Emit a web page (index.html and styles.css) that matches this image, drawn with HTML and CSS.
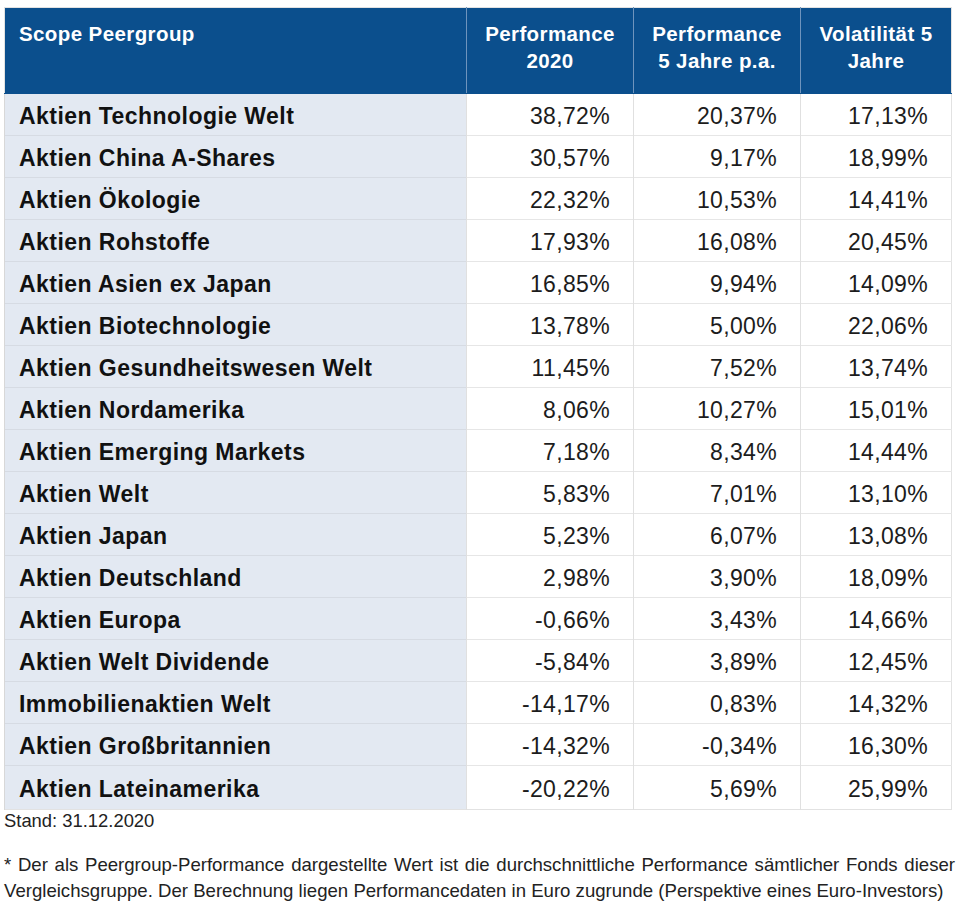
FILE: index.html
```html
<!DOCTYPE html>
<html lang="de">
<head>
<meta charset="utf-8">
<title>Scope Peergroup</title>
<link rel="stylesheet" href="styles.css">
</head>
<body>
<div class="page">
  <table class="peer">
    <colgroup>
      <col class="c1"><col class="c2"><col class="c3"><col class="c4">
    </colgroup>
    <thead>
      <tr>
        <th class="name">Scope Peergroup</th>
        <th>Performance<br>2020</th>
        <th>Performance<br>5 Jahre p.a.</th>
        <th>Volatilität 5<br>Jahre</th>
      </tr>
    </thead>
    <tbody>
      <tr><td class="name">Aktien Technologie Welt</td><td>38,72%</td><td>20,37%</td><td>17,13%</td></tr>
      <tr><td class="name">Aktien China A-Shares</td><td>30,57%</td><td>9,17%</td><td>18,99%</td></tr>
      <tr><td class="name">Aktien Ökologie</td><td>22,32%</td><td>10,53%</td><td>14,41%</td></tr>
      <tr><td class="name">Aktien Rohstoffe</td><td>17,93%</td><td>16,08%</td><td>20,45%</td></tr>
      <tr><td class="name">Aktien Asien ex Japan</td><td>16,85%</td><td>9,94%</td><td>14,09%</td></tr>
      <tr><td class="name">Aktien Biotechnologie</td><td>13,78%</td><td>5,00%</td><td>22,06%</td></tr>
      <tr><td class="name">Aktien Gesundheitswesen Welt</td><td>11,45%</td><td>7,52%</td><td>13,74%</td></tr>
      <tr><td class="name">Aktien Nordamerika</td><td>8,06%</td><td>10,27%</td><td>15,01%</td></tr>
      <tr><td class="name">Aktien Emerging Markets</td><td>7,18%</td><td>8,34%</td><td>14,44%</td></tr>
      <tr><td class="name">Aktien Welt</td><td>5,83%</td><td>7,01%</td><td>13,10%</td></tr>
      <tr><td class="name">Aktien Japan</td><td>5,23%</td><td>6,07%</td><td>13,08%</td></tr>
      <tr><td class="name">Aktien Deutschland</td><td>2,98%</td><td>3,90%</td><td>18,09%</td></tr>
      <tr><td class="name">Aktien Europa</td><td>-0,66%</td><td>3,43%</td><td>14,66%</td></tr>
      <tr><td class="name">Aktien Welt Dividende</td><td>-5,84%</td><td>3,89%</td><td>12,45%</td></tr>
      <tr><td class="name">Immobilienaktien Welt</td><td>-14,17%</td><td>0,83%</td><td>14,32%</td></tr>
      <tr><td class="name">Aktien Großbritannien</td><td>-14,32%</td><td>-0,34%</td><td>16,30%</td></tr>
      <tr><td class="name">Aktien Lateinamerika</td><td>-20,22%</td><td>5,69%</td><td>25,99%</td></tr>
    </tbody>
  </table>
  <p class="stand">Stand: 31.12.2020</p>
  <p class="note">* Der als Peergroup-Performance dargestellte Wert ist die durchschnittliche Performance sämtlicher Fonds dieser Vergleichsgruppe. Der Berechnung liegen Performancedaten in Euro zugrunde (Perspektive eines Euro-Investors)</p>
</div>
</body>
</html>
```

FILE: styles.css
```css
html, body {
  margin: 0;
  padding: 0;
  background: #ffffff;
}

body {
  font-family: "Liberation Sans", Arial, Helvetica, sans-serif;
  color: #1a1a1a;
}

.page {
  padding: 7px 5px 0 4px;
}

.peer {
  width: 947px;
  border-collapse: collapse;
  table-layout: fixed;
  border: 1px solid #e2e2e2;
}

.c1 { width: 462px; }
.c2 { width: 167px; }
.c3 { width: 167px; }
.c4 { width: 151px; }

.peer thead tr {
  height: 86px;
}

.peer th {
  background: #0b4f8d;
  color: #ffffff;
  font-size: 20.5px;
  font-weight: bold;
  line-height: 27px;
  letter-spacing: 0.4px;
  text-align: center;
  vertical-align: top;
  padding: 12px 6px 0 6px;
  border-left: 1px solid #6f94bd;
  border-bottom: 1px solid #0b4f8d;
}

.peer th.name {
  text-align: left;
  padding-left: 14px;
  border-left: none;
}

.peer tbody tr {
  height: 42px;
}

.peer td {
  font-size: 23px;
  line-height: 26px;
  letter-spacing: 0.35px;
  text-align: right;
  vertical-align: middle;
  padding: 3px 23px 0 8px;
  border-top: 1px solid #e6e6e6;
  border-left: 1px solid #e0e0e0;
  color: #1c1c1c;
}

.peer td.name {
  background: #e3e9f2;
  text-align: left;
  font-weight: bold;
  padding-left: 14px;
  letter-spacing: 0.45px;
  border-left: 1px solid #d8d8d8;
  border-top: 1px solid #d6dbe3;
  color: #111111;
}

.peer tbody tr:first-child td {
  border-top: none;
}

.peer tbody tr:last-child {
  height: 44px;
}

.stand {
  margin: 0;
  font-size: 18.4px;
  line-height: 22px;
  color: #222222;
}

.note {
  margin: 20px 0 0 0;
  width: 951px;
  font-size: 18.6px;
  line-height: 26px;
  text-align: justify;
  color: #222222;
}
```
